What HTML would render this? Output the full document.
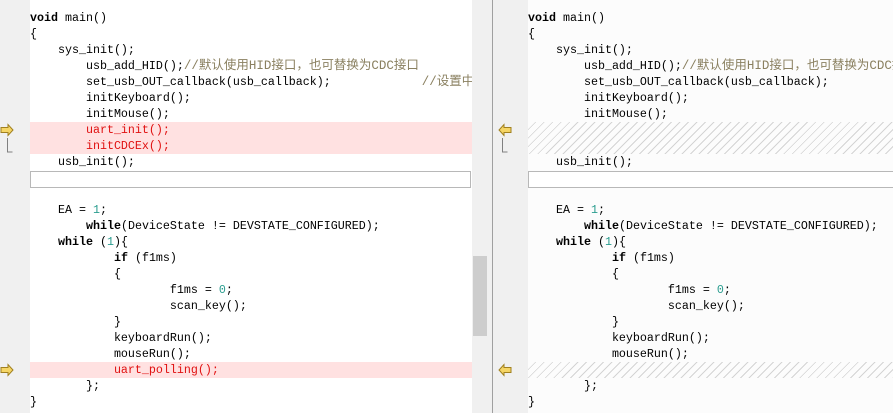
<!DOCTYPE html>
<html><head><meta charset="utf-8"><style>
html,body{margin:0;padding:0;width:893px;height:413px;overflow:hidden;background:#fff;font-family:"Liberation Mono","Noto Sans CJK SC",monospace;font-size:11.67px;}
.abs{position:absolute}
.pane{position:absolute;top:1px;height:413px;overflow:hidden}
.ln{position:absolute;left:0;height:16px;line-height:16px;white-space:pre;color:#000;width:100%;top:0}
.k{font-weight:bold}
.n{color:#2a9d8f}
.c{color:#8a8060;font-size:12.5px}
.r{color:#e01010}
.pink{background:#ffe1e1}
.hatch{background:repeating-linear-gradient(135deg,#fcfcfc 0 5px,#d4d4d4 5px 6px)}
.box{box-sizing:border-box;border:1px solid #b8b8b8;background:#fff}
</style></head><body>
<div class="abs" style="left:0;top:0;width:30px;height:413px;background:#f0f0f0"></div>
<div class="abs" style="left:472px;top:0;width:20px;height:413px;background:#f0f0f0"></div>
<div class="abs" style="left:473px;top:256px;width:14px;height:80px;background:#cdcdcd"></div>
<div class="abs" style="left:492px;top:0;width:1px;height:413px;background:#a0a0a0"></div>
<div class="abs" style="left:493px;top:0;width:35px;height:413px;background:#f0f0f0"></div>
<div class="abs" style="left:528px;top:0;width:365px;height:413px;background:#fcfcfc"></div>

<svg class="abs" style="left:0;top:123px" width="30" height="32"><path d="M1 4.5h7v-3l5 5.5-5 5.5v-3h-7z" fill="#f5d565" stroke="#a08020" stroke-width="1"/><path d="M7.5 15v14h5" fill="none" stroke="#808080"/></svg>
<svg class="abs" style="left:0;top:363px" width="30" height="16"><path d="M1 4.5h7v-3l5 5.5-5 5.5v-3h-7z" fill="#f5d565" stroke="#a08020" stroke-width="1"/></svg>
<svg class="abs" style="left:495px;top:123px" width="30" height="32"><path d="M16 4.5h-7v-3l-5 5.5 5 5.5v-3h7z" fill="#f5d565" stroke="#a08020" stroke-width="1"/><path d="M7.5 15v14h5" fill="none" stroke="#808080"/></svg>
<svg class="abs" style="left:495px;top:363px" width="30" height="16"><path d="M16 4.5h-7v-3l-5 5.5 5 5.5v-3h7z" fill="#f5d565" stroke="#a08020" stroke-width="1"/></svg>

<div class="pane" style="left:30px;width:442px">
<div class="ln" style="top:9px"><span class="k">void</span> main()</div>
<div class="ln" style="top:25px">{</div>
<div class="ln" style="top:41px">    sys_init();</div>
<div class="ln" style="top:57px">        usb_add_HID();<span class="c">//默认使用HID接口，也可替换为CDC接口</span></div>
<div class="ln" style="top:73px">        set_usb_OUT_callback(usb_callback);             <span class="c">//设置中断回调</span></div>
<div class="ln" style="top:89px">        initKeyboard();</div>
<div class="ln" style="top:105px">        initMouse();</div>
<div class="ln pink r" style="top:121px">        uart_init();</div>
<div class="ln pink r" style="top:137px">        initCDCEx();</div>
<div class="ln" style="top:153px">    usb_init();</div>
<div class="abs box" style="left:0;top:170px;width:441px;height:17px"></div>
<div class="ln" style="top:201px">    EA = <span class="n">1</span>;</div>
<div class="ln" style="top:217px">        <span class="k">while</span>(DeviceState != DEVSTATE_CONFIGURED);</div>
<div class="ln" style="top:233px">    <span class="k">while</span> (<span class="n">1</span>){</div>
<div class="ln" style="top:249px">            <span class="k">if</span> (f1ms)</div>
<div class="ln" style="top:265px">            {</div>
<div class="ln" style="top:281px">                    f1ms = <span class="n">0</span>;</div>
<div class="ln" style="top:297px">                    scan_key();</div>
<div class="ln" style="top:313px">            }</div>
<div class="ln" style="top:329px">            keyboardRun();</div>
<div class="ln" style="top:345px">            mouseRun();</div>
<div class="ln pink r" style="top:361px">            uart_polling();</div>
<div class="ln" style="top:377px">        };</div>
<div class="ln" style="top:393px">}</div>
</div>

<div class="pane" style="left:528px;width:365px">
<div class="ln" style="top:9px"><span class="k">void</span> main()</div>
<div class="ln" style="top:25px">{</div>
<div class="ln" style="top:41px">    sys_init();</div>
<div class="ln" style="top:57px">        usb_add_HID();<span class="c">//默认使用HID接口，也可替换为CDC接口</span></div>
<div class="ln" style="top:73px">        set_usb_OUT_callback(usb_callback);             <span class="c">//设置中断回调</span></div>
<div class="ln" style="top:89px">        initKeyboard();</div>
<div class="ln" style="top:105px">        initMouse();</div>
<div class="abs hatch" style="left:0;top:121px;width:365px;height:32px"></div>
<div class="ln" style="top:153px">    usb_init();</div>
<div class="abs box" style="left:0;top:170px;width:366px;height:17px"></div>
<div class="ln" style="top:201px">    EA = <span class="n">1</span>;</div>
<div class="ln" style="top:217px">        <span class="k">while</span>(DeviceState != DEVSTATE_CONFIGURED);</div>
<div class="ln" style="top:233px">    <span class="k">while</span> (<span class="n">1</span>){</div>
<div class="ln" style="top:249px">            <span class="k">if</span> (f1ms)</div>
<div class="ln" style="top:265px">            {</div>
<div class="ln" style="top:281px">                    f1ms = <span class="n">0</span>;</div>
<div class="ln" style="top:297px">                    scan_key();</div>
<div class="ln" style="top:313px">            }</div>
<div class="ln" style="top:329px">            keyboardRun();</div>
<div class="ln" style="top:345px">            mouseRun();</div>
<div class="abs hatch" style="left:0;top:361px;width:365px;height:16px"></div>
<div class="ln" style="top:377px">        };</div>
<div class="ln" style="top:393px">}</div>
</div>
</body></html>
